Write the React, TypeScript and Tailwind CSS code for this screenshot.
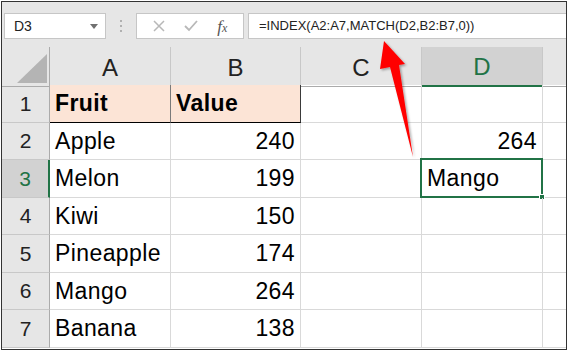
import React from 'react'

type Row = {
  n: number
  a?: string
  b?: string
  d?: string
}

const rows: Row[] = [
  { n: 1, a: 'Fruit', b: 'Value' },
  { n: 2, a: 'Apple', b: '240', d: '264' },
  { n: 3, a: 'Melon', b: '199', d: 'Mango' },
  { n: 4, a: 'Kiwi', b: '150' },
  { n: 5, a: 'Pineapple', b: '174' },
  { n: 6, a: 'Mango', b: '264' },
  { n: 7, a: 'Banana', b: '138' },
]

const cols = 'grid grid-cols-[48px_121px_130px_121px_121px_1fr]'
const cell = 'flex items-center border-r border-b border-[#d9d9d9] px-[5px] whitespace-nowrap tracking-[0.4px]'

const Toolbar = () => (
  <div className="h-[45px] flex items-start pt-[11px] pl-[2px] bg-[#e6e6e6]">
    <div className="relative w-[102px] h-[26px] bg-white border border-[#c6c6c6] flex items-center pl-[9px] text-[14px] text-[#222]">
      D3
      <svg className="absolute right-[7px] top-[10px]" width="8" height="5" viewBox="0 0 8 5">
        <path d="M0 0 H8 L4 5 Z" fill="#707070" />
      </svg>
    </div>
    <div className="w-[30px] h-[26px] flex flex-col items-center justify-center gap-[3px]">
      <span className="w-[2px] h-[2px] bg-[#b0b0b0]" />
      <span className="w-[2px] h-[2px] bg-[#b0b0b0]" />
      <span className="w-[2px] h-[2px] bg-[#b0b0b0]" />
    </div>
    <div className="w-[108px] h-[26px] bg-white border border-[#c6c6c6] flex items-center justify-around px-[6px]">
      <svg width="12" height="12" viewBox="0 0 12 12">
        <path d="M1 1 L11 11 M11 1 L1 11" stroke="#b8b8b8" strokeWidth="1.5" />
      </svg>
      <svg width="14" height="12" viewBox="0 0 14 12">
        <path d="M1 6 L5 10 L13 1" stroke="#b8b8b8" strokeWidth="1.8" fill="none" />
      </svg>
      <span className="italic text-[#555] text-[17px] leading-none" style={{ fontFamily: '"Liberation Serif", serif' }}>
        f<span className="text-[12px]">x</span>
      </span>
    </div>
    <div className="ml-[4px] flex-1 h-[26px] bg-white border border-[#c6c6c6] border-r-0 flex items-center pl-[10px] text-[13px] text-[#222]">
      =INDEX(A2:A7,MATCH(D2,B2:B7,0))
    </div>
  </div>
)

const HeaderRow = () => (
  <div className={`${cols} h-[38px] bg-[#e6e6e6] text-[24px] text-[#222]`}>
    <div className="relative border-r border-b border-[#ababab]">
      <svg className="absolute left-[15px] bottom-[3px]" width="30" height="29" viewBox="0 0 30 29">
        <path d="M0 29 H30 V0 Z" fill="#b4b4b4" />
      </svg>
    </div>
    {['A', 'B', 'C'].map((c) => (
      <div key={c} className="flex items-center justify-center border-r border-[#c8c8c8] border-b border-b-[#ababab] pt-[2px]">
        {c}
      </div>
    ))}
    <div className="flex items-center justify-center bg-[#d2d2d2] border-r border-[#c8c8c8] border-b-2 border-b-[#217346] text-[#217346] pt-[2px]">
      D
    </div>
    <div className="border-b border-[#ababab]" />
  </div>
)

const GridRow = ({ r }: { r: Row }) => {
  const first = r.n === 1
  const sel = r.n === 3
  return (
    <div className={`${cols} h-[37.5px] text-[23px] text-black`}>
      <div
        className={
          sel
            ? 'flex items-center justify-center bg-[#d2d2d2] text-[#217346] border-b border-[#c8c8c8] border-r-2 border-r-[#217346] text-[21px]'
            : 'flex items-center justify-center bg-[#e6e6e6] text-[#222] border-b border-[#c8c8c8] border-r border-r-[#ababab] text-[21px]'
        }
      >
        {r.n}
      </div>
      {first ? (
        <>
          <div className="flex items-center px-[5px] bg-[#fce4d6] font-bold tracking-[0.4px] border-r border-r-[#7a7a7a] border-b border-b-black">
            {r.a}
          </div>
          <div className="flex items-center px-[5px] bg-[#fce4d6] font-bold tracking-[0.4px] border-r border-r-[#3a3a3a] border-b border-b-black">
            {r.b}
          </div>
        </>
      ) : (
        <>
          <div className={cell}>{r.a}</div>
          <div className={`${cell} justify-end`}>{r.b}</div>
        </>
      )}
      <div className={cell} />
      <div className={`${cell} relative ${r.d === '264' ? 'justify-end' : ''}`}>
        {r.d}
        {sel && (
          <div className="absolute -left-[2px] -top-[2px] -right-[1px] -bottom-[1px] border-2 border-[#217346]">
            <div className="absolute -right-[4px] -bottom-[4px] w-[6px] h-[6px] bg-[#217346] border border-white" />
          </div>
        )}
      </div>
      <div className="border-b border-[#d9d9d9]" />
    </div>
  )
}

export default function App() {
  return (
    <div className="w-[568px] h-[352px] bg-white p-[1px]" style={{ fontFamily: '"Liberation Sans", Arial, sans-serif' }}>
      <div className="relative w-[566px] h-[349px] border border-[#333] overflow-hidden bg-white">
        <Toolbar />
        <HeaderRow />
        {rows.map((r) => (
          <GridRow key={r.n} r={r} />
        ))}
        <svg className="absolute left-0 top-0 pointer-events-none" width="566" height="349" viewBox="0 0 566 349">
          <defs>
            <filter id="sh" x="-50%" y="-20%" width="200%" height="140%">
              <feDropShadow dx="1.5" dy="1.5" stdDeviation="1" floodColor="#000" floodOpacity="0.35" />
            </filter>
          </defs>
          <polygon
            points="382,39 403,62 397,63 411,155 388,65 378,67"
            fill="#ff0000"
            filter="url(#sh)"
          />
        </svg>
      </div>
    </div>
  )
}
